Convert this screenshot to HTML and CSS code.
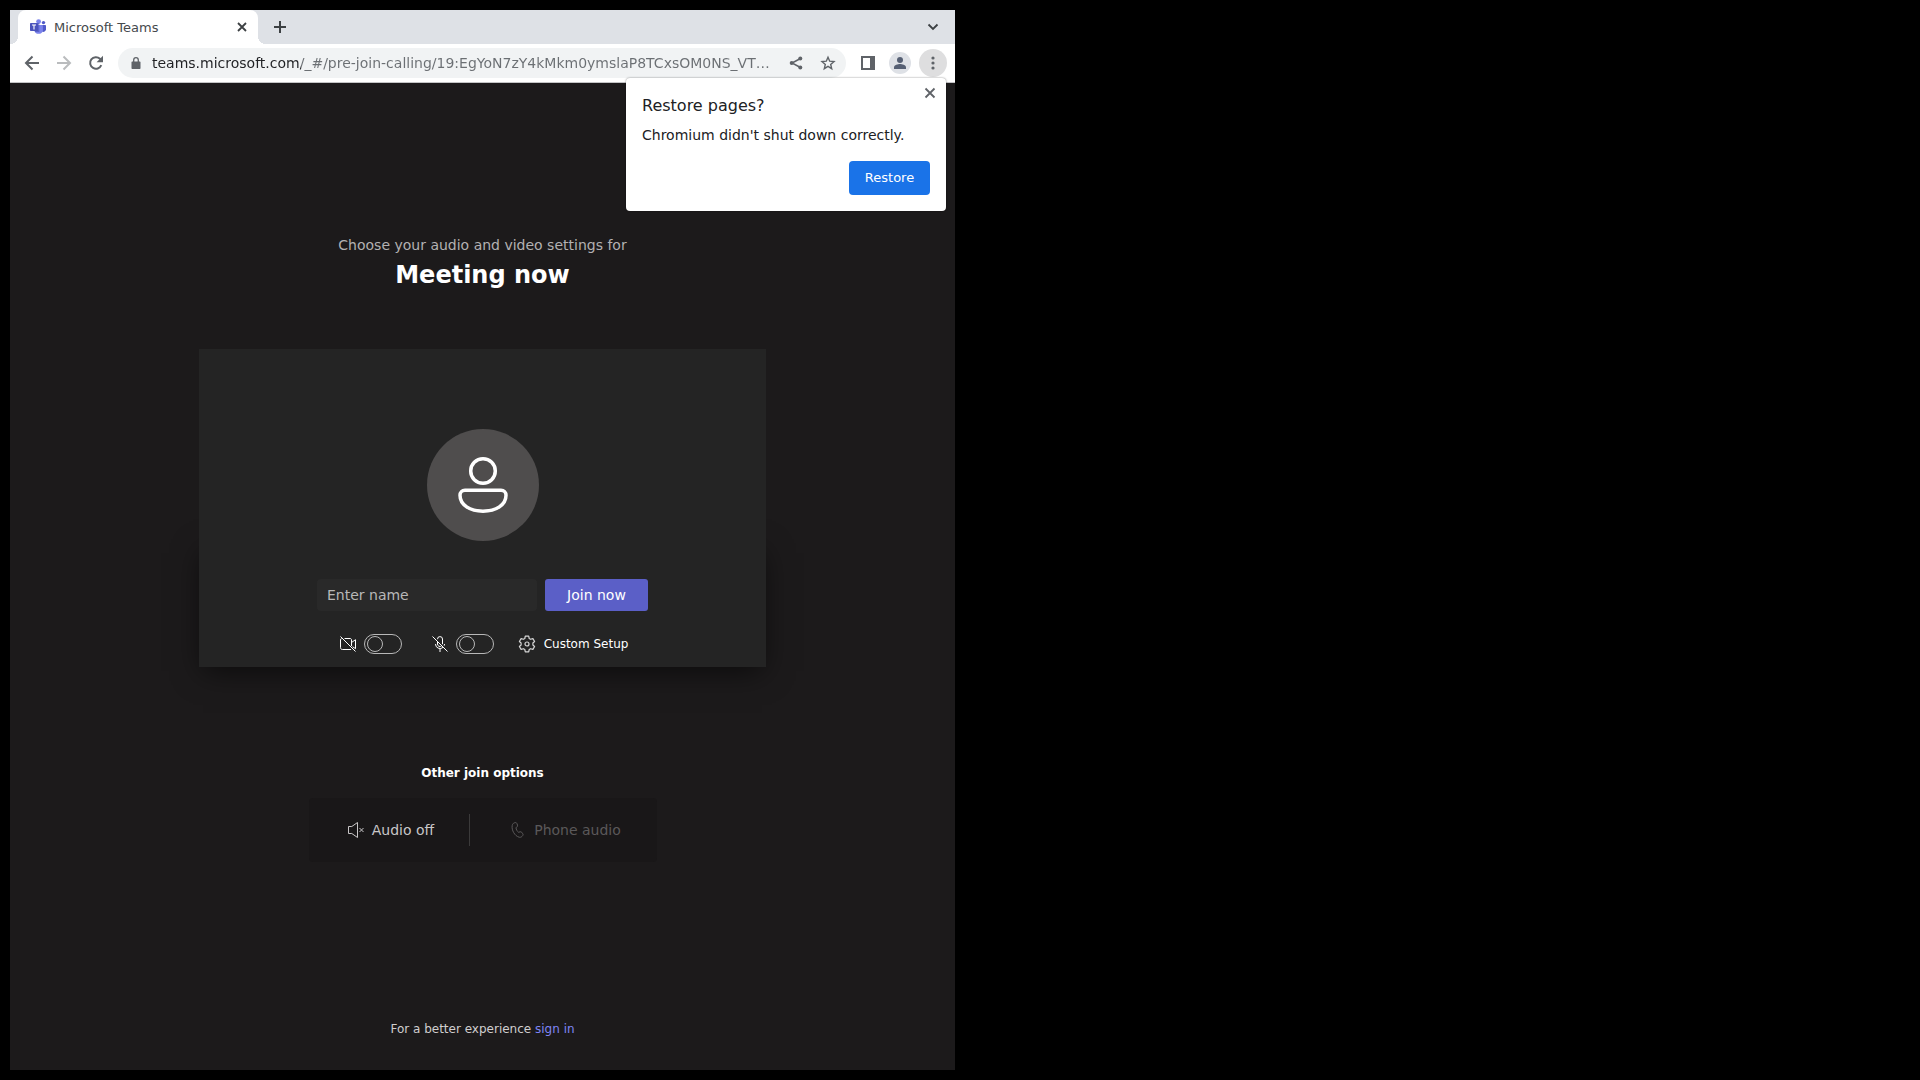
FILE: index.html
```html
<!DOCTYPE html>
<html lang="en">
<head>
<meta charset="utf-8">
<title>Microsoft Teams</title>
<link rel="stylesheet" href="styles.css">
</head>
<body>
<div class="browser">
  <div class="tabstrip">
    <div class="tab">
      <svg class="icon" width="16" height="16" viewBox="0 0 16 16" aria-hidden="true">
        <circle cx="13.500" cy="3.600" r="1.700" fill="#5059c9"/>
        <circle cx="8.600" cy="2.600" r="2.400" fill="#7b83eb"/>
        <path d="M11 6h4.300c.4 0 .7.300.7.700v3.600a2.700 2.700 0 0 1-4 2.300z" fill="#5059c9"/>
        <path d="M5 6h7.200c.4 0 .7.300.7.700v4.700a4.400 4.400 0 0 1-8.600 0z" fill="#7b83eb"/>
        <path d="M5 4h4.300v9H5z" fill="#464eb8" opacity=".6"/>
        <rect x="0" y="4" width="8" height="8" rx=".7" fill="#4b53bc"/>
        <path d="M2 6h4M4 6v4.500" stroke="#fff" stroke-width="1.100" fill="none"/>
      </svg>
      <span class="tab-title">Microsoft Teams</span>
      <button class="bare" type="button" aria-label="Close tab">
        <svg class="icon" width="16" height="16" viewBox="0 0 16 16"><path d="M4 4l8 8M12 4l-8 8" stroke="#3c4043" stroke-width="1.800"/></svg>
      </button>
    </div>
    <button class="bare new-tab" type="button" aria-label="New tab">
      <svg class="icon" width="16" height="16" viewBox="0 0 16 16"><path d="M8 2v12M2 8h12" stroke="#3c4043" stroke-width="2"/></svg>
    </button>
    <button class="bare tab-search" type="button" aria-label="Search tabs">
      <svg class="icon" width="16" height="16" viewBox="0 0 16 16"><path d="M3.500 5.500L8 10l4.500-4.500" stroke="#3c4043" stroke-width="1.800" fill="none"/></svg>
    </button>
  </div>

  <div class="toolbar">
    <div class="nav">
      <button class="bare" type="button" aria-label="Back">
        <svg class="icon" width="16" height="16" viewBox="0 0 16 16"><path d="M15 8H2M8.500 1.500L2 8l6.500 6.500" stroke="#5f6368" stroke-width="2" fill="none"/></svg>
      </button>
      <button class="bare" type="button" aria-label="Forward" disabled>
        <svg class="icon" width="16" height="16" viewBox="0 0 16 16"><path d="M1 8h13M7.500 1.500L14 8l-6.500 6.500" stroke="#babcbe" stroke-width="2" fill="none"/></svg>
      </button>
      <button class="bare" type="button" aria-label="Reload">
        <svg class="icon" width="16" height="16" viewBox="0 0 16 16"><path d="M13.300 10.200A5.800 5.800 0 1 1 12 3.800L13.600 5.400" stroke="#5f6368" stroke-width="2" fill="none"/><path d="M15 .8v6.400H8.600z" fill="#5f6368"/></svg>
      </button>
    </div>
    <div class="omnibox">
      <svg class="icon" width="12" height="12" viewBox="0 0 12 12" aria-hidden="true"><path d="M2.500 4.500h7c.6 0 1 .4 1 1V11c0 .6-.4 1-1 1h-7c-.6 0-1-.4-1-1V5.500c0-.6.4-1 1-1z" fill="#5f6368"/><path d="M3.700 5V3a2.300 2.300 0 0 1 4.600 0v2" stroke="#5f6368" stroke-width="1.300" fill="none"/></svg>
      <input class="address" type="text" aria-label="Address" value="teams.microsoft.com/_#/pre-join-calling/19:EgYoN7zY4kMkm0ymslaP8TCxsOM0NS_VT…">
      <button class="bare" type="button" aria-label="Share">
        <svg class="icon" width="16" height="16" viewBox="0 0 16 16"><path d="M12.500 3.500L4 8l8.500 4.500" stroke="#5f6368" stroke-width="1.500" fill="none"/><g fill="#5f6368"><circle cx="12.300" cy="3.400" r="2"/><circle cx="3.700" cy="8" r="2"/><circle cx="12.300" cy="12.600" r="2"/></g></svg>
      </button>
      <button class="bare" type="button" aria-label="Bookmark this page">
        <svg class="icon" width="16" height="16" viewBox="0 0 16 16"><path d="M8 2.200l1.700 4 4.300.4-3.300 2.800 1 4.300L8 11.400l-3.700 2.300 1-4.300L2 6.600l4.300-.4z" stroke="#5f6368" stroke-width="1.400" fill="none"/></svg>
      </button>
    </div>
    <div class="actions">
      <button class="bare" type="button" aria-label="Side panel">
        <svg class="icon" width="16" height="16" viewBox="0 0 16 16"><path d="M1 1h14v14H1zM3 3v10h7V3z" fill="#5f6368" fill-rule="evenodd"/></svg>
      </button>
      <button class="bare" type="button" aria-label="Profile">
        <svg class="icon" width="22" height="22" viewBox="0 0 22 22"><circle cx="11" cy="11" r="11" fill="#dee1e6"/><circle cx="11" cy="8" r="3" fill="#555f73"/><path d="M5 17v-1.800C5 13 9 12 11 12s6 1 6 3.200V17z" fill="#555f73"/></svg>
      </button>
      <button class="bare menu" type="button" aria-label="Menu">
        <svg class="icon" width="16" height="16" viewBox="0 0 16 16"><g fill="#5f6368"><circle cx="8" cy="3" r="1.600"/><circle cx="8" cy="8" r="1.600"/><circle cx="8" cy="13" r="1.600"/></g></svg>
      </button>
    </div>
  </div>

  <main class="prejoin">
    <p class="intro">Choose your audio and video settings for</p>
    <h1 class="title">Meeting now</h1>

    <section class="preview">
      <div class="stage">
        <div class="avatar">
          <svg class="icon" width="52" height="60" viewBox="0 0 52 60" aria-hidden="true"><g fill="none" stroke="#fff" stroke-width="3.500"><circle cx="26" cy="16" r="12.300"/><path d="M8 35.300h36c3 0 5 2 5 5C49 50 39 56.200 26 56.200S3 50 3 40.300c0-3 2-5 5-5z"/></g></svg>
        </div>
      </div>
      <div class="controls">
        <form class="join">
          <input class="name" type="text" placeholder="Enter name" aria-label="Enter name">
          <button class="join-now" type="button">Join now</button>
        </form>
        <div class="devices">
          <label class="device">
            <svg class="icon" width="16" height="16" viewBox="0 0 16 16" aria-hidden="true"><g fill="none" stroke="#fff"><path d="M4.500 2.500H10c1 0 1.500.6 1.500 1.500v6M11 13.500H2.500c-1.300 0-2-.7-2-2V4c0-.8.300-1.300 1-1.500M11.500 6.500l4-2.800v9l-3-2M.5.500l15 15"/></g></svg>
            <input class="switch" type="checkbox" aria-label="Camera">
          </label>
          <label class="device">
            <svg class="icon" width="16" height="16" viewBox="0 0 16 16" aria-hidden="true"><g fill="none" stroke="#fff"><path d="M5.500 3.200A2.500 2.500 0 0 1 10.500 3v5.200M5.500 5.500V8a2.500 2.500 0 0 0 4 2M3.500 8a4.500 4.500 0 0 0 7.500 3.400M12.500 8c0 .6-.1 1.200-.3 1.700M8 12.500V16M.5.500l15 15"/></g></svg>
            <input class="switch" type="checkbox" aria-label="Microphone">
          </label>
          <button class="bare setup" type="button">
            <svg class="icon" width="18" height="18" viewBox="0 0 18 18" aria-hidden="true"><g fill="none" stroke="#d6d6d6" stroke-width="1.200" stroke-linejoin="round"><path d="M7.300 1.200h3.400l.5 2.300 1.400.8 2.300-.7 1.700 2.900L14.900 8v2l1.700 1.500-1.700 2.900-2.300-.7-1.400.8-.5 2.300H7.300l-.5-2.300-1.400-.8-2.300.7-1.700-2.900L3.100 10V8L1.400 6.500l1.700-2.900 2.300.7 1.400-.8z"/><circle cx="9" cy="9" r="2"/></g></svg>
            <span>Custom Setup</span>
          </button>
        </div>
      </div>
    </section>

    <h2 class="subtitle">Other join options</h2>
    <div class="options">
      <button class="bare option" type="button">
        <svg class="icon" width="16" height="16" viewBox="0 0 16 16" aria-hidden="true"><path d="M.5 4.500h3.300L9.500.5v15l-5.700-4H.5zM11.500 6l4 4M15.500 6l-4 4" fill="none" stroke="currentColor"/></svg>
        <span>Audio off</span>
      </button>
      <button class="bare option" type="button" disabled>
        <svg class="icon" width="16" height="16" viewBox="0 0 16 16" aria-hidden="true"><path d="M4.200.9l1-.3c.7-.2 1.400.1 1.600.8l.7 1.700c.2.600.1 1.200-.4 1.600L6 5.800c0 1.500 1.300 3.700 2.600 4.500l1.500-.5c.6-.2 1.200 0 1.600.5l1.100 1.500c.4.600.4 1.300-.1 1.800l-.7.8c-.8.800-1.900 1.100-2.900.8C4.700 13.900 1.400 8.200 2.200 3.600c.2-1.300.9-2.300 2-2.700z" fill="none" stroke="currentColor"/></svg>
        <span>Phone audio</span>
      </button>
    </div>

    <footer class="signin">For a better experience <a class="link" href="#signin">sign in</a></footer>
  </main>

  <div class="bubble" role="dialog" aria-labelledby="bubble-title">
    <div class="bubble-head">
      <h2 class="bubble-title" id="bubble-title">Restore pages?</h2>
      <button class="bare" type="button" aria-label="Close">
        <svg class="icon" width="16" height="16" viewBox="0 0 16 16"><path d="M3.500 3.500l9 9M12.500 3.500l-9 9" stroke="#5f6368" stroke-width="1.800"/></svg>
      </button>
    </div>
    <p class="bubble-text">Chromium didn't shut down correctly.</p>
    <button class="restore" type="button">Restore</button>
  </div>
</div>
</body>
</html>
```
FILE: styles.css
```css
* { box-sizing: border-box; }

body {
  margin: 0;
  padding: 10px;
  background: #000;
  font-family: "DejaVu Sans", sans-serif;
  font-size: 14px;
}

h1, h2, p { margin: 0; }
button, input { font: inherit; }
.icon { display: block; flex: none; }

.bare {
  display: flex;
  align-items: center;
  justify-content: center;
  padding: 0;
  border: 0;
  background: none;
  color: inherit;
}

.browser {
  position: relative;
  display: flex;
  flex-direction: column;
  width: calc(50vw - 15px);
  min-height: calc(100vh - 20px);
}

/* Tab strip */
.tabstrip {
  display: flex;
  align-items: center;
  height: 34px;
  padding: 0 14px 0 8px;
  background: #dee1e6;
}

.tab {
  position: relative;
  display: flex;
  align-items: center;
  gap: 8px;
  width: 240px;
  height: 34px;
  padding: 0 8px 0 12px;
  border-radius: 8px 8px 0 0;
  background: #fff;
}

.tab::before,
.tab::after {
  content: "";
  position: absolute;
  bottom: 0;
  width: 8px;
  height: 8px;
}
.tab::before { right: 100%; background: radial-gradient(circle at 0 0, transparent 8px, #fff 8px); }
.tab::after { left: 100%; background: radial-gradient(circle at 100% 0, transparent 8px, #fff 8px); }

.tab-title { flex: 1; font-size: 13px; color: #45494d; }
.new-tab { margin-left: 14px; }
.tab-search { margin-left: auto; }

/* Toolbar */
.toolbar {
  display: flex;
  align-items: center;
  height: 39px;
  padding: 0 8px 0 14px;
  border-bottom: 1px solid #c4c4c6;
  background: #fff;
}

.nav { display: flex; gap: 16px; }

.omnibox {
  display: flex;
  flex: 1;
  align-items: center;
  gap: 16px;
  height: 30px;
  margin: 0 14px;
  padding: 0 10px 0 12px;
  border-radius: 15px;
  background: #f1f3f4;
}

.address {
  flex: 1;
  min-width: 0;
  margin-left: -6px;
  padding: 0;
  border: 0;
  outline: 0;
  /* host name dark, path grey */
  background: linear-gradient(to right, #202124 149px, #6b6f73 149px);
  background-clip: text;
  color: transparent;
  text-overflow: ellipsis;
}

.actions { display: flex; align-items: center; gap: 13px; }

.menu {
  width: 28px;
  height: 28px;
  margin-left: -5px;
  border-radius: 50%;
  background: #dededf;
}

/* Pre-join page */
.prejoin {
  display: flex;
  flex: 1;
  flex-direction: column;
  align-items: center;
  padding: 152px 0 31px;
  background: #1c1a1b;
  color: #fff;
}

.intro { line-height: 20px; color: #b3b1b2; }
.title { margin-top: 4px; font-size: 24px; line-height: 32px; }

.preview {
  display: flex;
  flex-direction: column;
  width: 60%;
  margin-top: 58px;
}

.stage {
  position: relative;
  z-index: 1;
  display: flex;
  justify-content: center;
  padding-top: 80px;
  background: #242424;
}

.avatar {
  display: flex;
  align-items: center;
  justify-content: center;
  width: 112px;
  height: 112px;
  border-radius: 50%;
  background: #4f4d4d;
}

.controls {
  display: flex;
  flex-direction: column;
  align-items: center;
  gap: 23px;
  padding: 38px 0 13px;
  background: #242424;
  box-shadow: 0 8px 28px -4px rgba(0, 0, 0, 0.6);
}

.join { display: flex; gap: 8px; }

.name {
  width: 220px;
  height: 32px;
  padding: 0 10px;
  border: 0;
  border-radius: 4px;
  background: #292929;
  color: #fff;
}
.name::placeholder { color: #b8b8b8; opacity: 1; }

.join-now {
  width: 103px;
  height: 32px;
  padding: 0;
  border: 0;
  border-radius: 3px;
  background: #5b5fc7;
  color: #fff;
}

.devices { display: flex; align-items: center; padding-left: 3px; }
.device { display: flex; align-items: center; gap: 8px; margin-right: 30px; }

.switch {
  display: flex;
  align-items: center;
  width: 38px;
  height: 20px;
  margin: 0;
  padding: 0 2px;
  appearance: none;
  border: 1px solid #b8b8b8;
  border-radius: 10px;
}
.switch::before {
  content: "";
  width: 14px;
  height: 14px;
  border: 1px solid #b8b8b8;
  border-radius: 50%;
}
.switch:checked { justify-content: flex-end; }

.setup { gap: 8px; margin-left: -6px; font-size: 12px; }

.subtitle { margin-top: 96px; font-size: 12px; line-height: 20px; }

.options {
  display: grid;
  grid-template-columns: 160px 188px;
  height: 64px;
  margin-top: 15px;
  padding: 16px 0;
  border-radius: 4px;
  background: #191718;
}

.option { gap: 8px; padding-left: 5px; color: #c8c6c7; }
.option + .option { border-left: 1px solid #3b3a3a; }
.option:disabled { color: #5b595a; }

.signin { margin-top: auto; font-size: 12px; line-height: 20px; color: #d0cecf; }
.link { color: #7f85f5; text-decoration: none; }

/* Restore bubble */
.bubble {
  position: absolute;
  top: 68px;
  right: 9px;
  z-index: 2;
  display: flex;
  flex-direction: column;
  width: 320px;
  padding: 7px 16px 16px;
  border-radius: 4px;
  background: #fff;
  box-shadow: 0 0 2px rgba(0, 0, 0, 0.5);
  color: #202124;
}

.bubble-head { display: flex; align-items: flex-start; justify-content: space-between; margin-right: -8px; }
.bubble-title { padding-top: 9px; font-size: 16px; font-weight: 400; line-height: 24px; }
.bubble-text { margin-top: 7px; line-height: 20px; }

.restore {
  align-self: flex-end;
  width: 81px;
  height: 34px;
  margin-top: 16px;
  padding: 0 0 2px;
  border: 0;
  border-radius: 4px;
  background: #1a73e8;
  color: #fff;
  font-size: 13px;
}
```
